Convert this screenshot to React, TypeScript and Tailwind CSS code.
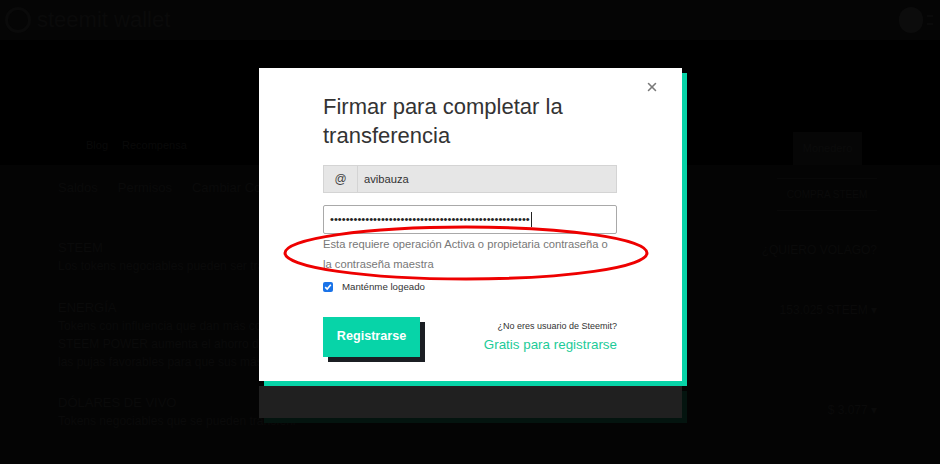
import { X } from 'lucide-react';

const sans = { fontFamily: '"Liberation Sans", Arial, sans-serif' };

function BackgroundPage() {
  return (
    <div className="w-[940px] h-[464px] bg-[#040404] text-[#0a0a0a] overflow-hidden" style={sans}>
      {/* Header */}
      <div className="h-[40px] bg-[#050505] flex items-center justify-between px-[5px]">
        <div className="flex items-center gap-[6px]">
          <div className="w-[26px] h-[26px] rounded-full border-[3px] border-[#0a0a0a]" />
          <span className="text-[22px] leading-none text-[#0a0a0a]">steemit wallet</span>
        </div>
        <div className="flex items-center gap-[4px] pr-[2px]">
          <div className="w-[24px] h-[26px] rounded-full bg-[#0c0c0c]" />
          <div className="w-[6px] h-[10px] border-y-[2px] border-[#0a0a0a]" />
        </div>
      </div>

      {/* Banner */}
      <div className="h-[125px] bg-black flex items-end justify-between pl-[86px] pr-[78px]">
        <div className="flex gap-[14px] pb-[12px] text-[11px] text-[#090909]">
          <span>Blog</span>
          <span>Recompensa</span>
        </div>
        <div className="w-[69px] h-[33px] bg-[#060606] flex items-center justify-center text-[11px] text-[#0b0b0b]">
          Monedero
        </div>
      </div>

      {/* Content */}
      <div className="flex justify-between pl-[58px] pr-[63px] pt-[13px]">
        <div className="flex flex-col text-[12px]">
          <div className="flex gap-[20px] text-[13px] text-[#0a0a0a]">
            <span>Saldos</span>
            <span>Permisos</span>
            <span>Cambiar Contraseña</span>
          </div>
          <div className="mt-[41px] leading-[18px]">
            <div className="text-[13px]">STEEM</div>
            <div>Los tokens negociables pueden ser transferidos</div>
            <div className="mt-[24px] text-[13px]">ENERGÍA</div>
            <div>Tokens con influencia que dan más control</div>
            <div>STEEM POWER aumenta el ahorro de energía</div>
            <div>las pujas favorables para que sus más útiles</div>
            <div className="mt-[23px] text-[13px]">DÓLARES DE VIVO</div>
            <div>Tokens negociables que se pueden transferir</div>
          </div>
        </div>
        <div className="flex flex-col items-end text-[12px] w-[100px] whitespace-nowrap">
          <div className="w-full border-y border-[#080808] py-[8px] text-center text-[10px]">COMPRA STEEM</div>
          <div className="mt-[30px]">¿QUIERO VOLAGO?</div>
          <div className="mt-[42px]">153.025 STEEM ▾</div>
          <div className="mt-[82px]">$ 3.077 ▾</div>
        </div>
      </div>
    </div>
  );
}

function Modal() {
  return (
    <div className="absolute left-[259px] top-[68px] w-[423px]" style={sans}>
      <div className="relative bg-white shadow-[5px_5px_0_#07d4a8] pt-[24px] pb-[24px] pl-[64px] pr-[65px]">
        <X className="absolute right-[23px] top-[12px] w-[14px] h-[14px] text-[#7a7a7a]" strokeWidth={2.6} />

        <h2 className="text-[22px] leading-[29px] text-[#333] font-normal">
          Firmar para completar la transferencia
        </h2>

        {/* Username */}
        <div className="mt-[15px] flex h-[28px] border border-[#d4d4d4] bg-[#e6e6e6]">
          <div className="w-[34px] flex items-center justify-center border-r border-[#d4d4d4] text-[12px] text-[#444]">@</div>
          <div className="flex items-center pl-[6px] text-[11.2px] text-[#333]">avibauza</div>
        </div>

        {/* Password */}
        <div className="mt-[12px] h-[29px] border border-[#a9a9a9] rounded-[2px] flex items-center pl-[6px]">
          <span className="text-[11.2px] text-[#222]">{'•'.repeat(51)}</span>
          <span className="ml-[1px] w-px h-[15px] bg-[#222]" />
        </div>

        {/* Help text with red ellipse */}
        <div className="relative">
          <p className="text-[11.2px] leading-[20px] text-[#777]">
            Esta requiere operación Activa o propietaria contraseña o la contraseña maestra
          </p>
          <svg className="absolute left-[-40px] top-[-10px] pointer-events-none" width="370" height="60" viewBox="0 0 370 60">
            <ellipse cx="183" cy="29" rx="181" ry="26" fill="none" stroke="#ee0000" strokeWidth="3" />
          </svg>
        </div>

        {/* Keep logged in */}
        <label className="mt-[6px] flex items-center gap-[9px]">
          <span className="w-[10px] h-[10px] rounded-[2px] bg-[#1a73e8] flex items-center justify-center">
            <svg width="8" height="8" viewBox="0 0 8 8">
              <path d="M1.2 4.2 L3.2 6.1 L6.8 1.8" fill="none" stroke="white" strokeWidth="1.6" />
            </svg>
          </span>
          <span className="text-[9.7px] text-[#333]">Manténme logeado</span>
        </label>

        {/* Actions */}
        <div className="mt-[22px] flex items-start justify-between">
          <button className="w-[97px] h-[40px] bg-[#07d4a8] text-white font-bold text-[12.6px] shadow-[5px_5px_0_#1b1e23]">
            Registrarse
          </button>
          <div className="pt-[2px] flex flex-col items-end">
            <span className="text-[9px] leading-[14px] text-[#333]">¿No eres usuario de Steemit?</span>
            <span className="mt-[3px] text-[13.4px] leading-[18px] text-[#1ccb98]">Gratis para registrarse</span>
          </div>
        </div>
      </div>
      <div className="mt-[5px] h-[32px] bg-[#202020] shadow-[5px_5px_0_#04140f]" />
    </div>
  );
}

export default function App() {
  return (
    <div className="relative w-[940px] h-[464px] overflow-hidden">
      <BackgroundPage />
      <Modal />
    </div>
  );
}
